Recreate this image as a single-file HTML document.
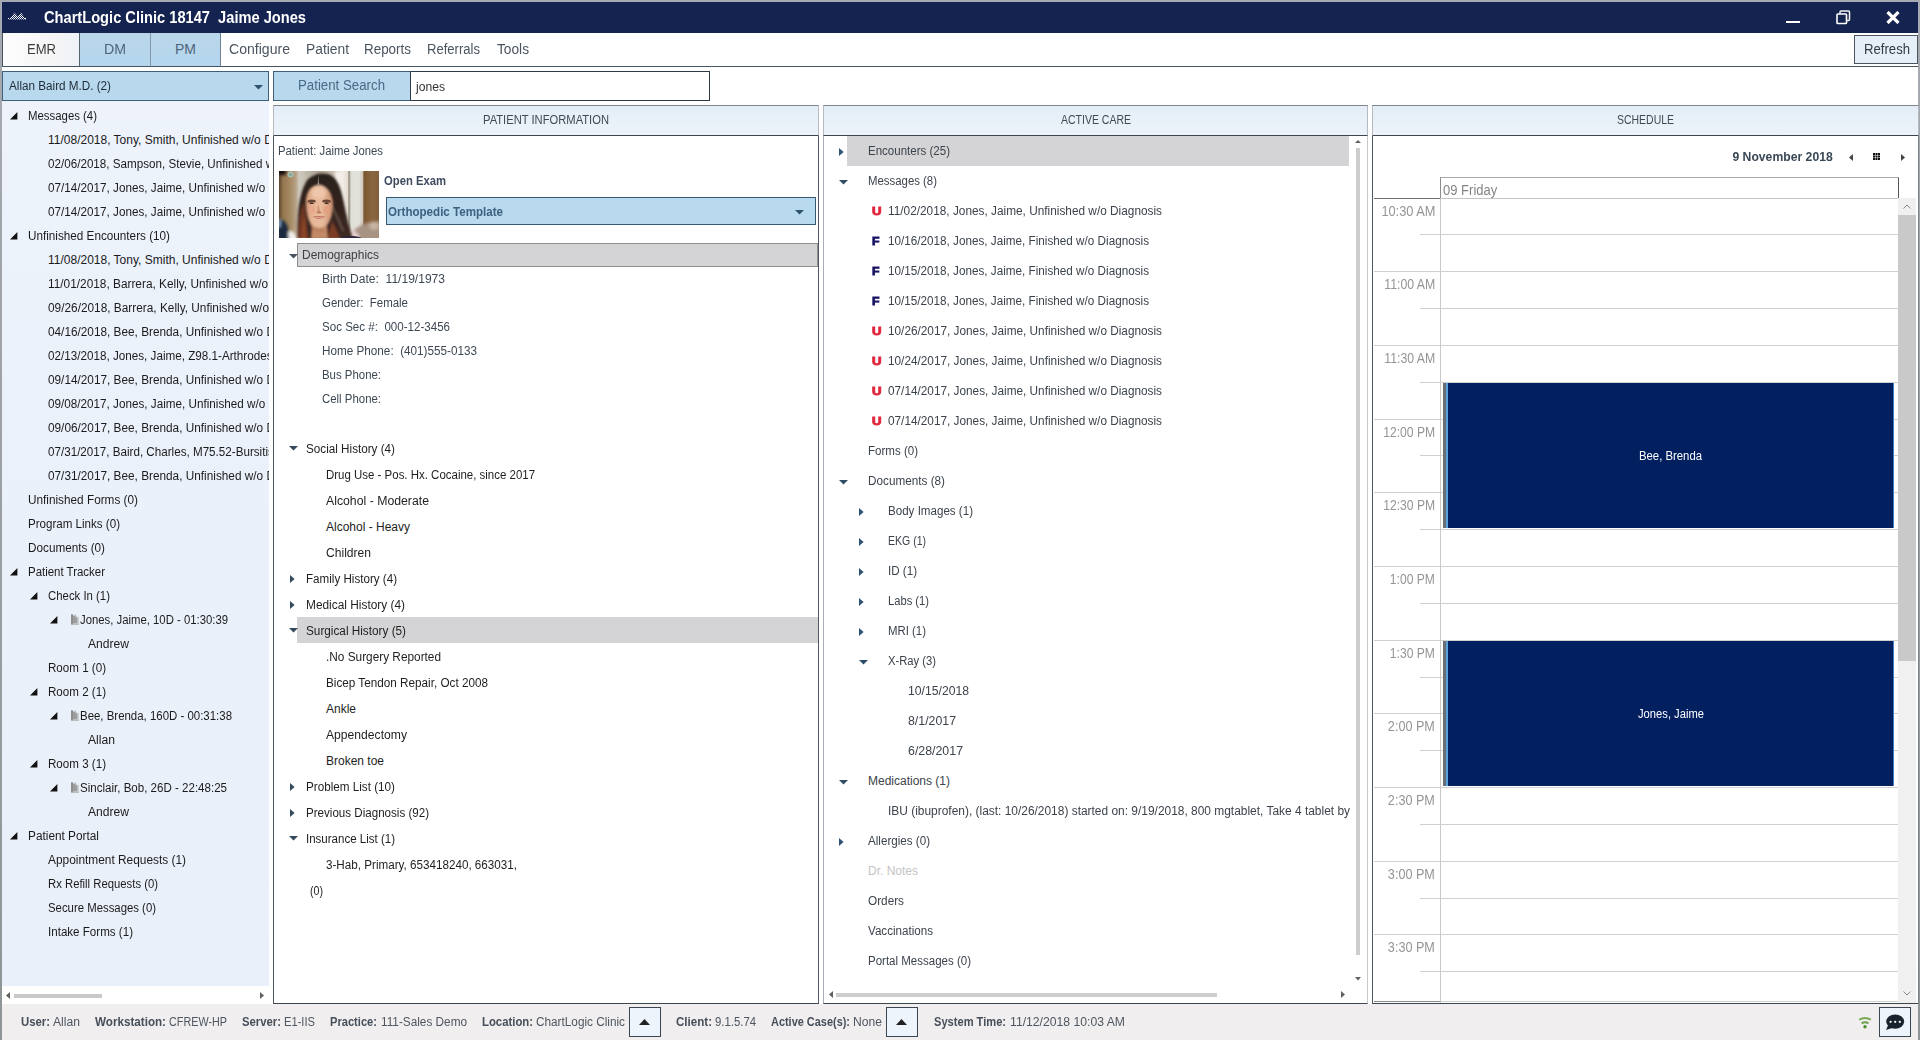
<!DOCTYPE html>
<html><head><meta charset="utf-8"><title>ChartLogic</title>
<style>
html,body{margin:0;padding:0;}
body{width:1920px;height:1040px;overflow:hidden;position:relative;background:#fff;font-family:"Liberation Sans",sans-serif;}
.t{position:absolute;white-space:pre;display:block;}
.b{position:absolute;box-sizing:border-box;display:block;}
</style></head><body>
<div class="b" style="left:0px;top:0px;width:1920px;height:1040px;background:linear-gradient(180deg,#a7aab0 0%,#9ea2a6 40%,#8f9497 100%);"></div>
<div class="b" style="left:2px;top:2px;width:1916px;height:1038px;background:#ffffff;"></div>
<div class="b" style="left:2px;top:2px;width:1916px;height:31px;background:#14234f;"></div>
<span class="t" style="top:7.0px;font-size:16px;line-height:22px;color:#ffffff;font-weight:bold;left:44px;transform-origin:0 50%;transform:scaleX(0.9150);">ChartLogic Clinic 18147  Jaime Jones</span>
<svg class="b" style="left:8px;top:12px" width="20" height="8" viewBox="0 0 20 8"><defs><pattern id="dp" width="2" height="2" patternUnits="userSpaceOnUse"><rect width="1" height="1" fill="#fff"/><rect x="1" y="1" width="1" height="1" fill="#fff"/></pattern></defs>
<path d="M1 7.5 L6.5 0.5 L10 4.5 L13 0.5 L18 7.5 Z" fill="url(#dp)"/><rect x="0" y="6" width="1" height="1" fill="#fff"/><rect x="17" y="6" width="1" height="1" fill="#fff"/></svg>
<div class="b" style="left:1786px;top:21px;width:14px;height:2px;background:#ffffff;"></div>
<svg class="b" style="left:1836px;top:10px" width="15" height="15" viewBox="0 0 15 15"><rect x="1" y="4" width="9.5" height="9.5" rx="0.8" fill="none" stroke="#fff" stroke-width="1.6"/><path d="M4 4 V2 Q4 1 5 1 H12.5 Q13.5 1 13.5 2 V9.5 Q13.5 10.5 12.5 10.5 H10.5" fill="none" stroke="#f4f4f4" stroke-width="1.5"/></svg>
<svg class="b" style="left:1886px;top:11px" width="14" height="13" viewBox="0 0 14 13"><path d="M1.5 1 L12.5 12 M12.5 1 L1.5 12" stroke="#fff" stroke-width="3.2"/></svg>
<div class="b" style="left:2px;top:33px;width:1916px;height:34px;background:#ffffff;border-bottom:1px solid #46545f;"></div>
<div class="b" style="left:2px;top:33px;width:78px;height:34px;background:linear-gradient(90deg,#fdfdfd 0%,#f4f4f5 70%,#eff2f9 100%);border:1px solid #46545f;border-top:none;"></div>
<div class="b" style="left:79px;top:33px;width:72px;height:34px;background:linear-gradient(180deg,#bad6ea,#b4d6ee);border:1px solid #46545f;border-top:none;border-left:1px solid #55656f;border-right:1px solid #8298aa;"></div>
<div class="b" style="left:150px;top:33px;width:71px;height:34px;background:linear-gradient(180deg,#bad6ea,#b4d6ee);border:1px solid #46545f;border-top:none;border-left:1px solid #8298aa;border-right:1px solid #6f8290;"></div>
<span class="t" style="top:39.0px;font-size:14px;line-height:20px;color:#3c3c3c;left:27px;transform-origin:0 50%;transform:scaleX(0.9321);">EMR</span>
<span class="t" style="top:39.0px;font-size:14px;line-height:20px;color:#4e647a;left:104px;transform-origin:0 50%;transform:scaleX(1.0104);">DM</span>
<span class="t" style="top:39.0px;font-size:14px;line-height:20px;color:#4e647a;left:175px;transform-origin:0 50%;">PM</span>
<span class="t" style="top:39.0px;font-size:14px;line-height:20px;color:#4a5560;left:229px;transform-origin:0 50%;transform:scaleX(1.0049);">Configure</span>
<span class="t" style="top:39.0px;font-size:14px;line-height:20px;color:#4a5560;left:306px;transform-origin:0 50%;transform:scaleX(0.9866);">Patient</span>
<span class="t" style="top:39.0px;font-size:14px;line-height:20px;color:#4a5560;left:364px;transform-origin:0 50%;transform:scaleX(0.9588);">Reports</span>
<span class="t" style="top:39.0px;font-size:14px;line-height:20px;color:#4a5560;left:427px;transform-origin:0 50%;transform:scaleX(0.9332);">Referrals</span>
<span class="t" style="top:39.0px;font-size:14px;line-height:20px;color:#4a5560;left:497px;transform-origin:0 50%;transform:scaleX(0.9791);">Tools</span>
<div class="b" style="left:1854px;top:35px;width:64px;height:29px;background:#e6eef7;border:1px solid #4b5560;"></div>
<span class="t" style="top:39.0px;font-size:14px;line-height:20px;color:#333b44;left:1864px;transform-origin:0 50%;transform:scaleX(0.9384);">Refresh</span>
<div class="b" style="left:2px;top:71px;width:267px;height:30px;background:#b8d8ee;border:1px solid #3f5f7a;"></div>
<span class="t" style="top:77.0px;font-size:12px;line-height:18px;color:#1e2a36;left:9px;transform-origin:0 50%;transform:scaleX(0.9742);">Allan Baird M.D. (2)</span>
<svg class="b" style="left:254px;top:85px" width="9" height="5" viewBox="0 0 9 5"><path d="M0 0 L9 0 L4.5 4.6 Z" fill="#2f536e"/></svg>
<div class="b" style="left:273px;top:71px;width:138px;height:30px;background:#b8d8ee;border:1px solid #3f5f7a;"></div>
<span class="t" style="top:75.0px;font-size:14px;line-height:20px;color:#4a6a85;left:298px;transform-origin:0 50%;transform:scaleX(0.9474);">Patient Search</span>
<div class="b" style="left:410px;top:71px;width:300px;height:30px;background:#ffffff;border:1px solid #2e3a44;"></div>
<span class="t" style="top:77.5px;font-size:12px;line-height:18px;color:#333;left:416px;transform-origin:0 50%;transform:scaleX(1.0109);">jones</span>
<div class="b" style="left:2px;top:101px;width:267px;height:885px;background:linear-gradient(180deg,#eef3fb 0%,#eaf1fa 40%,#e9f0f9 100%);"></div>
<div class="b" style="left:269px;top:101px;width:2px;height:903px;background:#ffffff;"></div>
<div class="b" style="left:2px;top:986px;width:267px;height:18px;background:#ffffff;"></div>
<svg class="b" style="left:6px;top:992px" width="4" height="7" viewBox="0 0 4 7"><path d="M4 0 L0 3.5 L4 7 Z" fill="#606060"/></svg>
<svg class="b" style="left:260px;top:992px" width="4" height="7" viewBox="0 0 4 7"><path d="M0 0 L4 3.5 L0 7 Z" fill="#606060"/></svg>
<div class="b" style="left:14px;top:994px;width:88px;height:4px;background:#c9c9c9;"></div>
<div class="b" style="left:3px;top:101px;width:266px;height:885px;overflow:hidden;"><div class="b" style="left:-3px;top:-101px;width:300px;height:1000px;">
<svg class="b" style="left:10px;top:112px" width="8" height="8" viewBox="0 0 8 8"><path d="M7.4 0 L7.4 7.4 L0 7.4 Z" fill="#111111"/></svg>
<span class="t" style="top:107.0px;font-size:12px;line-height:18px;color:#1b1b1b;left:28px;transform-origin:0 50%;transform:scaleX(0.9492);">Messages (4)</span>
<span class="t" style="top:131.0px;font-size:12px;line-height:18px;color:#1b1b1b;left:48px;transform-origin:0 50%;">11/08/2018, Tony, Smith, Unfinished w/o Diagnosis</span>
<span class="t" style="top:155.0px;font-size:12px;line-height:18px;color:#1b1b1b;left:48px;transform-origin:0 50%;transform:scaleX(0.9710);">02/06/2018, Sampson, Stevie, Unfinished w/o Diagnosis</span>
<span class="t" style="top:179.0px;font-size:12px;line-height:18px;color:#1b1b1b;left:48px;transform-origin:0 50%;transform:scaleX(0.9750);">07/14/2017, Jones, Jaime, Unfinished w/o Diagnosis</span>
<span class="t" style="top:203.0px;font-size:12px;line-height:18px;color:#1b1b1b;left:48px;transform-origin:0 50%;transform:scaleX(0.9750);">07/14/2017, Jones, Jaime, Unfinished w/o Diagnosis</span>
<svg class="b" style="left:10px;top:232px" width="8" height="8" viewBox="0 0 8 8"><path d="M7.4 0 L7.4 7.4 L0 7.4 Z" fill="#111111"/></svg>
<span class="t" style="top:227.0px;font-size:12px;line-height:18px;color:#1b1b1b;left:28px;transform-origin:0 50%;transform:scaleX(0.9765);">Unfinished Encounters (10)</span>
<span class="t" style="top:251.0px;font-size:12px;line-height:18px;color:#1b1b1b;left:48px;transform-origin:0 50%;">11/08/2018, Tony, Smith, Unfinished w/o Diagnosis</span>
<span class="t" style="top:275.0px;font-size:12px;line-height:18px;color:#1b1b1b;left:48px;transform-origin:0 50%;transform:scaleX(0.9870);">11/01/2018, Barrera, Kelly, Unfinished w/o Diagnosis</span>
<span class="t" style="top:299.0px;font-size:12px;line-height:18px;color:#1b1b1b;left:48px;transform-origin:0 50%;transform:scaleX(0.9870);">09/26/2018, Barrera, Kelly, Unfinished w/o Diagnosis</span>
<span class="t" style="top:323.0px;font-size:12px;line-height:18px;color:#1b1b1b;left:48px;transform-origin:0 50%;transform:scaleX(0.9830);">04/16/2018, Bee, Brenda, Unfinished w/o Diagnosis</span>
<span class="t" style="top:347.0px;font-size:12px;line-height:18px;color:#1b1b1b;left:48px;transform-origin:0 50%;transform:scaleX(0.9730);">02/13/2018, Jones, Jaime, Z98.1-Arthrodesis status</span>
<span class="t" style="top:371.0px;font-size:12px;line-height:18px;color:#1b1b1b;left:48px;transform-origin:0 50%;transform:scaleX(0.9830);">09/14/2017, Bee, Brenda, Unfinished w/o Diagnosis</span>
<span class="t" style="top:395.0px;font-size:12px;line-height:18px;color:#1b1b1b;left:48px;transform-origin:0 50%;transform:scaleX(0.9750);">09/08/2017, Jones, Jaime, Unfinished w/o Diagnosis</span>
<span class="t" style="top:419.0px;font-size:12px;line-height:18px;color:#1b1b1b;left:48px;transform-origin:0 50%;transform:scaleX(0.9830);">09/06/2017, Bee, Brenda, Unfinished w/o Diagnosis</span>
<span class="t" style="top:443.0px;font-size:12px;line-height:18px;color:#1b1b1b;left:48px;transform-origin:0 50%;transform:scaleX(0.9700);">07/31/2017, Baird, Charles, M75.52-Bursitis of left shoulder</span>
<span class="t" style="top:467.0px;font-size:12px;line-height:18px;color:#1b1b1b;left:48px;transform-origin:0 50%;transform:scaleX(0.9830);">07/31/2017, Bee, Brenda, Unfinished w/o Diagnosis</span>
<span class="t" style="top:491.0px;font-size:12px;line-height:18px;color:#1b1b1b;left:28px;transform-origin:0 50%;transform:scaleX(0.9819);">Unfinished Forms (0)</span>
<span class="t" style="top:515.0px;font-size:12px;line-height:18px;color:#1b1b1b;left:28px;transform-origin:0 50%;transform:scaleX(0.9647);">Program Links (0)</span>
<span class="t" style="top:539.0px;font-size:12px;line-height:18px;color:#1b1b1b;left:28px;transform-origin:0 50%;transform:scaleX(0.9785);">Documents (0)</span>
<svg class="b" style="left:10px;top:568px" width="8" height="8" viewBox="0 0 8 8"><path d="M7.4 0 L7.4 7.4 L0 7.4 Z" fill="#111111"/></svg>
<span class="t" style="top:563.0px;font-size:12px;line-height:18px;color:#1b1b1b;left:28px;transform-origin:0 50%;transform:scaleX(0.9541);">Patient Tracker</span>
<svg class="b" style="left:30px;top:592px" width="8" height="8" viewBox="0 0 8 8"><path d="M7.4 0 L7.4 7.4 L0 7.4 Z" fill="#111111"/></svg>
<span class="t" style="top:587.0px;font-size:12px;line-height:18px;color:#1b1b1b;left:48px;transform-origin:0 50%;transform:scaleX(0.9486);">Check In (1)</span>
<svg class="b" style="left:50px;top:616px" width="8" height="8" viewBox="0 0 8 8"><path d="M7.4 0 L7.4 7.4 L0 7.4 Z" fill="#111111"/></svg>
<svg class="b" style="left:71px;top:614px" width="8" height="11" viewBox="0 0 8 11"><rect x="0" y="0.3" width="2" height="10" fill="#8e8e8e"/><path d="M2 1.6 H4.6 L6.6 3.8 V9.6 H2 Z" fill="#9d9d9d"/><path d="M4.4 0.4 V3.6 H7.6" fill="none" stroke="#b9b9b9" stroke-width="0.9"/><rect x="6.8" y="3.6" width="1" height="7" fill="#c9c9c9"/><rect x="0" y="9.7" width="7.8" height="1" fill="#a9a9a9"/></svg>
<span class="t" style="top:611.0px;font-size:12px;line-height:18px;color:#1b1b1b;left:80px;transform-origin:0 50%;transform:scaleX(0.9442);">Jones, Jaime, 10D - 01:30:39</span>
<span class="t" style="top:635.0px;font-size:12px;line-height:18px;color:#1b1b1b;left:88px;transform-origin:0 50%;transform:scaleX(1.0077);">Andrew</span>
<span class="t" style="top:659.0px;font-size:12px;line-height:18px;color:#1b1b1b;left:48px;transform-origin:0 50%;transform:scaleX(0.9664);">Room 1 (0)</span>
<svg class="b" style="left:30px;top:688px" width="8" height="8" viewBox="0 0 8 8"><path d="M7.4 0 L7.4 7.4 L0 7.4 Z" fill="#111111"/></svg>
<span class="t" style="top:683.0px;font-size:12px;line-height:18px;color:#1b1b1b;left:48px;transform-origin:0 50%;transform:scaleX(0.9664);">Room 2 (1)</span>
<svg class="b" style="left:50px;top:712px" width="8" height="8" viewBox="0 0 8 8"><path d="M7.4 0 L7.4 7.4 L0 7.4 Z" fill="#111111"/></svg>
<svg class="b" style="left:71px;top:710px" width="8" height="11" viewBox="0 0 8 11"><rect x="0" y="0.3" width="2" height="10" fill="#8e8e8e"/><path d="M2 1.6 H4.6 L6.6 3.8 V9.6 H2 Z" fill="#9d9d9d"/><path d="M4.4 0.4 V3.6 H7.6" fill="none" stroke="#b9b9b9" stroke-width="0.9"/><rect x="6.8" y="3.6" width="1" height="7" fill="#c9c9c9"/><rect x="0" y="9.7" width="7.8" height="1" fill="#a9a9a9"/></svg>
<span class="t" style="top:707.0px;font-size:12px;line-height:18px;color:#1b1b1b;left:80px;transform-origin:0 50%;transform:scaleX(0.9533);">Bee, Brenda, 160D - 00:31:38</span>
<span class="t" style="top:731.0px;font-size:12px;line-height:18px;color:#1b1b1b;left:88px;transform-origin:0 50%;transform:scaleX(1.0119);">Allan</span>
<svg class="b" style="left:30px;top:760px" width="8" height="8" viewBox="0 0 8 8"><path d="M7.4 0 L7.4 7.4 L0 7.4 Z" fill="#111111"/></svg>
<span class="t" style="top:755.0px;font-size:12px;line-height:18px;color:#1b1b1b;left:48px;transform-origin:0 50%;transform:scaleX(0.9664);">Room 3 (1)</span>
<svg class="b" style="left:50px;top:784px" width="8" height="8" viewBox="0 0 8 8"><path d="M7.4 0 L7.4 7.4 L0 7.4 Z" fill="#111111"/></svg>
<svg class="b" style="left:71px;top:782px" width="8" height="11" viewBox="0 0 8 11"><rect x="0" y="0.3" width="2" height="10" fill="#8e8e8e"/><path d="M2 1.6 H4.6 L6.6 3.8 V9.6 H2 Z" fill="#9d9d9d"/><path d="M4.4 0.4 V3.6 H7.6" fill="none" stroke="#b9b9b9" stroke-width="0.9"/><rect x="6.8" y="3.6" width="1" height="7" fill="#c9c9c9"/><rect x="0" y="9.7" width="7.8" height="1" fill="#a9a9a9"/></svg>
<span class="t" style="top:779.0px;font-size:12px;line-height:18px;color:#1b1b1b;left:80px;transform-origin:0 50%;transform:scaleX(0.9623);">Sinclair, Bob, 26D - 22:48:25</span>
<span class="t" style="top:803.0px;font-size:12px;line-height:18px;color:#1b1b1b;left:88px;transform-origin:0 50%;transform:scaleX(1.0077);">Andrew</span>
<svg class="b" style="left:10px;top:832px" width="8" height="8" viewBox="0 0 8 8"><path d="M7.4 0 L7.4 7.4 L0 7.4 Z" fill="#111111"/></svg>
<span class="t" style="top:827.0px;font-size:12px;line-height:18px;color:#1b1b1b;left:28px;transform-origin:0 50%;transform:scaleX(0.9855);">Patient Portal</span>
<span class="t" style="top:851.0px;font-size:12px;line-height:18px;color:#1b1b1b;left:48px;transform-origin:0 50%;transform:scaleX(0.9899);">Appointment Requests (1)</span>
<span class="t" style="top:875.0px;font-size:12px;line-height:18px;color:#1b1b1b;left:48px;transform-origin:0 50%;transform:scaleX(0.9426);">Rx Refill Requests (0)</span>
<span class="t" style="top:899.0px;font-size:12px;line-height:18px;color:#1b1b1b;left:48px;transform-origin:0 50%;transform:scaleX(0.9470);">Secure Messages (0)</span>
<span class="t" style="top:923.0px;font-size:12px;line-height:18px;color:#1b1b1b;left:48px;transform-origin:0 50%;transform:scaleX(0.9657);">Intake Forms (1)</span>
</div></div>
<div class="b" style="left:273px;top:105px;width:546px;height:31px;background:linear-gradient(180deg,#e4edf7 0%,#e8f0f8 45%,#edf3f9 100%);border:1px solid #b4bac0;border-top:1px solid #7d858c;border-bottom:1px solid #3d464e;"></div>
<div class="b" style="left:273px;top:136px;width:546px;height:868px;background:#ffffff;border-left:1px solid #4d5a66;border-right:1px solid #4d5a66;border-bottom:1px solid #3d464e;"></div>
<span class="t" style="top:111.0px;font-size:12px;line-height:18px;color:#3f4a55;left:483.0px;transform-origin:0 50%;transform:scaleX(0.9325);">PATIENT INFORMATION</span>
<div class="b" style="left:823px;top:105px;width:545px;height:31px;background:linear-gradient(180deg,#e4edf7 0%,#e8f0f8 45%,#edf3f9 100%);border:1px solid #b4bac0;border-top:1px solid #7d858c;border-bottom:1px solid #3d464e;"></div>
<div class="b" style="left:823px;top:136px;width:545px;height:868px;background:#ffffff;border-left:1px solid #a9adb1;border-right:1px solid #c6cacf;border-bottom:1px solid #3d464e;"></div>
<span class="t" style="top:111.0px;font-size:12px;line-height:18px;color:#3f4a55;left:1060.5px;transform-origin:0 50%;transform:scaleX(0.8748);">ACTIVE CARE</span>
<div class="b" style="left:1372px;top:105px;width:547px;height:31px;background:linear-gradient(180deg,#e4edf7 0%,#e8f0f8 45%,#edf3f9 100%);border:1px solid #b4bac0;border-top:1px solid #7d858c;border-bottom:1px solid #3d464e;"></div>
<div class="b" style="left:1372px;top:136px;width:547px;height:868px;background:#ffffff;border-left:1px solid #4d5a66;border-right:1px solid #4d5a66;border-bottom:1px solid #3d464e;"></div>
<span class="t" style="top:111.0px;font-size:12px;line-height:18px;color:#3f4a55;left:1617.0px;transform-origin:0 50%;transform:scaleX(0.8722);">SCHEDULE</span>
<div class="b" style="left:1918px;top:136px;width:1px;height:868px;background:#7d8388;"></div>
<span class="t" style="top:142.0px;font-size:12px;line-height:18px;color:#3d4854;left:278px;transform-origin:0 50%;transform:scaleX(0.9426);">Patient: Jaime Jones</span>
<span class="t" style="top:172.0px;font-size:12px;line-height:18px;color:#3e4b5f;font-weight:bold;left:384px;transform-origin:0 50%;transform:scaleX(0.9391);">Open Exam</span>
<div class="b" style="left:386px;top:197px;width:430px;height:28px;background:#b8d9ee;border:1px solid #375872;"></div>
<span class="t" style="top:202.5px;font-size:12px;line-height:18px;color:#3f5f7e;font-weight:bold;left:388px;transform-origin:0 50%;transform:scaleX(0.9654);">Orthopedic Template</span>
<svg class="b" style="left:795px;top:210px" width="9" height="5" viewBox="0 0 9 5"><path d="M0 0 L9 0 L4.5 4.6 Z" fill="#2f536e"/></svg>
<div class="b" style="left:297px;top:243px;width:521px;height:24px;background:#d4d3d5;border:1px solid #8e8e8e;"></div>
<svg class="b" style="left:289px;top:254px" width="9" height="5" viewBox="0 0 9 5"><path d="M0 0 L9 0 L4.5 4.6 Z" fill="#4a5661"/></svg>
<span class="t" style="top:246.0px;font-size:12px;line-height:18px;color:#3f3f3f;left:302px;transform-origin:0 50%;transform:scaleX(0.9953);">Demographics</span>
<span class="t" style="top:270.0px;font-size:12px;line-height:18px;color:#3d4854;left:322px;transform-origin:0 50%;transform:scaleX(1.0039);">Birth Date:  11/19/1973</span>
<span class="t" style="top:294.0px;font-size:12px;line-height:18px;color:#3d4854;left:322px;transform-origin:0 50%;transform:scaleX(0.9551);">Gender:  Female</span>
<span class="t" style="top:318.0px;font-size:12px;line-height:18px;color:#3d4854;left:322px;transform-origin:0 50%;transform:scaleX(0.9642);">Soc Sec #:  000-12-3456</span>
<span class="t" style="top:342.0px;font-size:12px;line-height:18px;color:#3d4854;left:322px;transform-origin:0 50%;transform:scaleX(0.9763);">Home Phone:  (401)555-0133</span>
<span class="t" style="top:366.0px;font-size:12px;line-height:18px;color:#3d4854;left:322px;transform-origin:0 50%;transform:scaleX(0.9509);">Bus Phone:</span>
<span class="t" style="top:390.0px;font-size:12px;line-height:18px;color:#3d4854;left:322px;transform-origin:0 50%;transform:scaleX(0.9510);">Cell Phone:</span>
<svg class="b" style="left:289px;top:446px" width="9" height="5" viewBox="0 0 9 5"><path d="M0 0 L9 0 L4.5 4.6 Z" fill="#34495c"/></svg>
<span class="t" style="top:440.0px;font-size:12px;line-height:18px;color:#1e1e1e;left:306px;transform-origin:0 50%;transform:scaleX(0.9742);">Social History (4)</span>
<span class="t" style="top:466.0px;font-size:12px;line-height:18px;color:#1e1e1e;left:326px;transform-origin:0 50%;transform:scaleX(0.9554);">Drug Use - Pos. Hx. Cocaine, since 2017</span>
<span class="t" style="top:492.0px;font-size:12px;line-height:18px;color:#1e1e1e;left:326px;transform-origin:0 50%;transform:scaleX(1.0227);">Alcohol - Moderate</span>
<span class="t" style="top:518.0px;font-size:12px;line-height:18px;color:#1e1e1e;left:326px;transform-origin:0 50%;">Alcohol - Heavy</span>
<span class="t" style="top:544.0px;font-size:12px;line-height:18px;color:#1e1e1e;left:326px;transform-origin:0 50%;transform:scaleX(1.0070);">Children</span>
<svg class="b" style="left:290px;top:575px" width="5" height="8" viewBox="0 0 5 8"><path d="M0 0 L4.6 4 L0 8 Z" fill="#34495c"/></svg>
<span class="t" style="top:570.0px;font-size:12px;line-height:18px;color:#1e1e1e;left:306px;transform-origin:0 50%;transform:scaleX(0.9681);">Family History (4)</span>
<svg class="b" style="left:290px;top:601px" width="5" height="8" viewBox="0 0 5 8"><path d="M0 0 L4.6 4 L0 8 Z" fill="#34495c"/></svg>
<span class="t" style="top:596.0px;font-size:12px;line-height:18px;color:#1e1e1e;left:306px;transform-origin:0 50%;transform:scaleX(0.9898);">Medical History (4)</span>
<div class="b" style="left:297px;top:617px;width:521px;height:26px;background:#d4d3d5;"></div>
<svg class="b" style="left:289px;top:628px" width="9" height="5" viewBox="0 0 9 5"><path d="M0 0 L9 0 L4.5 4.6 Z" fill="#34495c"/></svg>
<span class="t" style="top:622.0px;font-size:12px;line-height:18px;color:#1e1e1e;left:306px;transform-origin:0 50%;transform:scaleX(0.9802);">Surgical History (5)</span>
<span class="t" style="top:648.0px;font-size:12px;line-height:18px;color:#1e1e1e;left:326px;transform-origin:0 50%;transform:scaleX(0.9852);">.No Surgery Reported</span>
<span class="t" style="top:674.0px;font-size:12px;line-height:18px;color:#1e1e1e;left:326px;transform-origin:0 50%;transform:scaleX(0.9766);">Bicep Tendon Repair, Oct 2008</span>
<span class="t" style="top:700.0px;font-size:12px;line-height:18px;color:#1e1e1e;left:326px;transform-origin:0 50%;">Ankle</span>
<span class="t" style="top:726.0px;font-size:12px;line-height:18px;color:#1e1e1e;left:326px;transform-origin:0 50%;transform:scaleX(1.0119);">Appendectomy</span>
<span class="t" style="top:752.0px;font-size:12px;line-height:18px;color:#1e1e1e;left:326px;transform-origin:0 50%;">Broken toe</span>
<svg class="b" style="left:290px;top:783px" width="5" height="8" viewBox="0 0 5 8"><path d="M0 0 L4.6 4 L0 8 Z" fill="#34495c"/></svg>
<span class="t" style="top:778.0px;font-size:12px;line-height:18px;color:#1e1e1e;left:306px;transform-origin:0 50%;transform:scaleX(0.9741);">Problem List (10)</span>
<svg class="b" style="left:290px;top:809px" width="5" height="8" viewBox="0 0 5 8"><path d="M0 0 L4.6 4 L0 8 Z" fill="#34495c"/></svg>
<span class="t" style="top:804.0px;font-size:12px;line-height:18px;color:#1e1e1e;left:306px;transform-origin:0 50%;transform:scaleX(0.9656);">Previous Diagnosis (92)</span>
<svg class="b" style="left:289px;top:836px" width="9" height="5" viewBox="0 0 9 5"><path d="M0 0 L9 0 L4.5 4.6 Z" fill="#34495c"/></svg>
<span class="t" style="top:830.0px;font-size:12px;line-height:18px;color:#1e1e1e;left:306px;transform-origin:0 50%;transform:scaleX(0.9600);">Insurance List (1)</span>
<span class="t" style="top:856.0px;font-size:12px;line-height:18px;color:#1e1e1e;left:326px;transform-origin:0 50%;transform:scaleX(0.9717);">3-Hab, Primary, 653418240, 663031,</span>
<span class="t" style="top:882.0px;font-size:12px;line-height:18px;color:#1e1e1e;left:310px;transform-origin:0 50%;transform:scaleX(0.8863);">(0)</span>
<svg class="b" style="left:279px;top:171px" width="100" height="67" viewBox="0 0 100 67"><defs>
<filter id="b1" x="-20%" y="-20%" width="140%" height="140%"><feGaussianBlur stdDeviation="1.6"/></filter>
<filter id="b2" x="-20%" y="-20%" width="140%" height="140%"><feGaussianBlur stdDeviation="0.9"/></filter>
<filter id="b3" x="-20%" y="-20%" width="140%" height="140%"><feGaussianBlur stdDeviation="0.55"/></filter>
<linearGradient id="bg" x1="0" x2="1" y1="0" y2="0">
<stop offset="0" stop-color="#5a4630"/><stop offset="0.04" stop-color="#95774f"/><stop offset="0.12" stop-color="#a88c66"/><stop offset="0.17" stop-color="#b7a488"/><stop offset="0.2" stop-color="#cfcac0"/><stop offset="0.27" stop-color="#c2bcb0"/><stop offset="0.4" stop-color="#a79f8c"/>
<stop offset="0.58" stop-color="#cfc5b8"/><stop offset="0.63" stop-color="#f1ebe4"/><stop offset="0.685" stop-color="#e6ded4"/><stop offset="0.70" stop-color="#8f8a78"/><stop offset="0.72" stop-color="#dfe0d8"/><stop offset="0.80" stop-color="#e3e2dc"/><stop offset="0.835" stop-color="#cfc8bc"/><stop offset="0.85" stop-color="#7a5631"/><stop offset="0.93" stop-color="#8a6640"/><stop offset="1" stop-color="#80603c"/></linearGradient>
<linearGradient id="hair" x1="0" x2="0" y1="0" y2="1"><stop offset="0" stop-color="#2b211e"/><stop offset="0.55" stop-color="#33241f"/><stop offset="1" stop-color="#402a22"/></linearGradient>
<linearGradient id="skin" x1="0" x2="1" y1="0" y2="0"><stop offset="0" stop-color="#cf9674"/><stop offset="0.25" stop-color="#e7b898"/><stop offset="0.6" stop-color="#e9bc9e"/><stop offset="1" stop-color="#c98e6e"/></linearGradient>
<clipPath id="pc"><rect width="100" height="67"/></clipPath>
</defs>
<g clip-path="url(#pc)">
<rect width="100" height="67" fill="url(#bg)"/>
<g filter="url(#b1)">
<rect x="-2" y="-2" width="9" height="6" fill="#14100c"/>
<path d="M-2 50 Q4 46 8 54 L13 70 L-2 70 Z" fill="#1a2a40"/>
<rect x="-1" y="48" width="2.5" height="8" fill="#8fb0d8"/>
<path d="M9 62 Q14 55 19 70 L10 70 Z" fill="#f0eeee"/>
<path d="M74 60 Q86 49 102 50 L102 70 L72 70 Z" fill="#a89282"/>
<ellipse cx="95" cy="55" rx="5" ry="4" fill="#c8b4a2"/>
<path d="M64 62 Q72 54 80 64 L80 70 L62 70 Z" fill="#e4d0cf"/>
<rect x="56" y="0" width="8" height="30" fill="#f4eee8"/>
</g>
<circle cx="11.5" cy="3.6" r="3" fill="#a9bfb1" filter="url(#b3)"/>
<circle cx="11.5" cy="3.6" r="1.6" fill="#86a596" filter="url(#b3)"/>
<g filter="url(#b2)">
<path d="M18.5 68 C18 45 19.5 24 27 11 C32 3 45 0 53 5 C62 11 64 28 67.5 44 C69.5 54 72 62 74 68 Z" fill="url(#hair)"/>
<path d="M19 68 C19 52 20.5 40 25 31 C27 40 27.5 55 30 68 Z" fill="#6a3420"/>
<path d="M22 68 C22 58 23 50 25.5 44 L28 68 Z" fill="#8a4528"/>
<path d="M47 68 C50 62 52 56 53 50 C56 56 59 62 61 68 Z" fill="#7b3d25"/>
<path d="M51 30 C56 40 61 50 65 60 L63.5 60 C59 50 55 40 50 31 Z" fill="#6d5a4e"/>
</g>
<g filter="url(#b2)">
<path d="M26.8 31 C26.8 21 32.5 14 40 13.6 C47 14 52.8 21 53.8 31 C54.6 41 51.6 50.5 47 55.5 C43.2 59 37.3 59 33.6 55.5 C29 50.5 26.8 41 26.8 31 Z" fill="url(#skin)"/>
<path d="M33 53 C36 58 45 58 48 53 L49 68 L32 68 Z" fill="#c48a68"/>
<path d="M30 50 C33 58 40 60 46 57 L44 61 L34 60 Z" fill="#b87d5c"/>
<ellipse cx="40" cy="22" rx="7" ry="5" fill="#efc6ab"/>
<ellipse cx="33" cy="39" rx="3.5" ry="4" fill="#e8a88c"/>
<ellipse cx="47.5" cy="39" rx="3.5" ry="4" fill="#e2a080"/>
</g>
<path d="M39.2 4 L40.3 15 L38.6 15 Z" fill="#9c9384" filter="url(#b3)"/>
<g filter="url(#b3)">
<path d="M28.5 29.8 Q32 27.4 36.5 29.2 L36.5 31.4 Q32.5 30.2 29 31.8 Z" fill="#6b4436"/>
<path d="M43.5 29.2 Q48 27.4 52 29.8 L51.5 31.8 Q48 30.2 43.5 31.4 Z" fill="#6b4436"/>
<ellipse cx="32.7" cy="32.2" rx="2.2" ry="0.9" fill="#4a2f26"/>
<ellipse cx="47.6" cy="32.2" rx="2.2" ry="0.9" fill="#4a2f26"/>
<path d="M39 33 L41.6 41 L38 41.4 Z" fill="#cf9774"/>
<ellipse cx="40" cy="41.6" rx="2.6" ry="1" fill="#b97a5e"/>
<path d="M33.5 45.6 Q40 44.2 46.5 45.6 Q40 50.5 33.5 45.6 Z" fill="#c0705c"/>
<path d="M35.3 46 Q40 46.9 44.7 46 Q40 47.9 35.3 46Z" fill="#f3e0d8"/>
<path d="M60 67 Q70 63.5 82 66.5 L82 68 L60 68 Z" fill="#2d2540"/>
</g></g></svg>
<div class="b" style="left:847px;top:136px;width:502px;height:30px;background:#d4d3d5;"></div>
<svg class="b" style="left:839px;top:147.5px" width="5" height="8" viewBox="0 0 5 8"><path d="M0 0 L4.6 4 L0 8 Z" fill="#2f5374"/></svg>
<span class="t" style="top:142.0px;font-size:12px;line-height:18px;color:#3c434c;left:868px;transform-origin:0 50%;transform:scaleX(0.9604);">Encounters (25)</span>
<svg class="b" style="left:839px;top:180px" width="9" height="5" viewBox="0 0 9 5"><path d="M0 0 L9 0 L4.5 4.6 Z" fill="#2f4d66"/></svg>
<span class="t" style="top:172.0px;font-size:12px;line-height:18px;color:#3c434c;left:868px;transform-origin:0 50%;transform:scaleX(0.9492);">Messages (8)</span>
<span class="t" style="top:203.0px;font-size:11px;line-height:17px;color:#e0263c;font-weight:bold;left:872px;transform-origin:0 50%;transform:scaleX(1.1959);-webkit-text-stroke:0.9px #e0263c;">U</span>
<span class="t" style="top:202.0px;font-size:12px;line-height:18px;color:#3c434c;left:888px;transform-origin:0 50%;transform:scaleX(0.9858);">11/02/2018, Jones, Jaime, Unfinished w/o Diagnosis</span>
<span class="t" style="top:233.0px;font-size:11px;line-height:17px;color:#1a1464;font-weight:bold;left:872.3px;transform-origin:0 50%;transform:scaleX(1.1163);-webkit-text-stroke:0.8px #1a1464;">F</span>
<span class="t" style="top:232.0px;font-size:12px;line-height:18px;color:#3c434c;left:888px;transform-origin:0 50%;transform:scaleX(0.9758);">10/16/2018, Jones, Jaime, Finished w/o Diagnosis</span>
<span class="t" style="top:263.0px;font-size:11px;line-height:17px;color:#1a1464;font-weight:bold;left:872.3px;transform-origin:0 50%;transform:scaleX(1.1163);-webkit-text-stroke:0.8px #1a1464;">F</span>
<span class="t" style="top:262.0px;font-size:12px;line-height:18px;color:#3c434c;left:888px;transform-origin:0 50%;transform:scaleX(0.9758);">10/15/2018, Jones, Jaime, Finished w/o Diagnosis</span>
<span class="t" style="top:293.0px;font-size:11px;line-height:17px;color:#1a1464;font-weight:bold;left:872.3px;transform-origin:0 50%;transform:scaleX(1.1163);-webkit-text-stroke:0.8px #1a1464;">F</span>
<span class="t" style="top:292.0px;font-size:12px;line-height:18px;color:#3c434c;left:888px;transform-origin:0 50%;transform:scaleX(0.9758);">10/15/2018, Jones, Jaime, Finished w/o Diagnosis</span>
<span class="t" style="top:323.0px;font-size:11px;line-height:17px;color:#e0263c;font-weight:bold;left:872px;transform-origin:0 50%;transform:scaleX(1.1959);-webkit-text-stroke:0.9px #e0263c;">U</span>
<span class="t" style="top:322.0px;font-size:12px;line-height:18px;color:#3c434c;left:888px;transform-origin:0 50%;transform:scaleX(0.9827);">10/26/2017, Jones, Jaime, Unfinished w/o Diagnosis</span>
<span class="t" style="top:353.0px;font-size:11px;line-height:17px;color:#e0263c;font-weight:bold;left:872px;transform-origin:0 50%;transform:scaleX(1.1959);-webkit-text-stroke:0.9px #e0263c;">U</span>
<span class="t" style="top:352.0px;font-size:12px;line-height:18px;color:#3c434c;left:888px;transform-origin:0 50%;transform:scaleX(0.9827);">10/24/2017, Jones, Jaime, Unfinished w/o Diagnosis</span>
<span class="t" style="top:383.0px;font-size:11px;line-height:17px;color:#e0263c;font-weight:bold;left:872px;transform-origin:0 50%;transform:scaleX(1.1959);-webkit-text-stroke:0.9px #e0263c;">U</span>
<span class="t" style="top:382.0px;font-size:12px;line-height:18px;color:#3c434c;left:888px;transform-origin:0 50%;transform:scaleX(0.9827);">07/14/2017, Jones, Jaime, Unfinished w/o Diagnosis</span>
<span class="t" style="top:413.0px;font-size:11px;line-height:17px;color:#e0263c;font-weight:bold;left:872px;transform-origin:0 50%;transform:scaleX(1.1959);-webkit-text-stroke:0.9px #e0263c;">U</span>
<span class="t" style="top:412.0px;font-size:12px;line-height:18px;color:#3c434c;left:888px;transform-origin:0 50%;transform:scaleX(0.9827);">07/14/2017, Jones, Jaime, Unfinished w/o Diagnosis</span>
<span class="t" style="top:442.0px;font-size:12px;line-height:18px;color:#3c434c;left:868px;transform-origin:0 50%;transform:scaleX(0.9616);">Forms (0)</span>
<svg class="b" style="left:839px;top:480px" width="9" height="5" viewBox="0 0 9 5"><path d="M0 0 L9 0 L4.5 4.6 Z" fill="#2f4d66"/></svg>
<span class="t" style="top:472.0px;font-size:12px;line-height:18px;color:#3c434c;left:868px;transform-origin:0 50%;transform:scaleX(0.9785);">Documents (8)</span>
<svg class="b" style="left:859px;top:507.5px" width="5" height="8" viewBox="0 0 5 8"><path d="M0 0 L4.6 4 L0 8 Z" fill="#2f5374"/></svg>
<span class="t" style="top:502.0px;font-size:12px;line-height:18px;color:#3c434c;left:888px;transform-origin:0 50%;transform:scaleX(0.9655);">Body Images (1)</span>
<svg class="b" style="left:859px;top:537.5px" width="5" height="8" viewBox="0 0 5 8"><path d="M0 0 L4.6 4 L0 8 Z" fill="#2f5374"/></svg>
<span class="t" style="top:532.0px;font-size:12px;line-height:18px;color:#3c434c;left:888px;transform-origin:0 50%;transform:scaleX(0.8767);">EKG (1)</span>
<svg class="b" style="left:859px;top:567.5px" width="5" height="8" viewBox="0 0 5 8"><path d="M0 0 L4.6 4 L0 8 Z" fill="#2f5374"/></svg>
<span class="t" style="top:562.0px;font-size:12px;line-height:18px;color:#3c434c;left:888px;transform-origin:0 50%;transform:scaleX(0.9666);">ID (1)</span>
<svg class="b" style="left:859px;top:597.5px" width="5" height="8" viewBox="0 0 5 8"><path d="M0 0 L4.6 4 L0 8 Z" fill="#2f5374"/></svg>
<span class="t" style="top:592.0px;font-size:12px;line-height:18px;color:#3c434c;left:888px;transform-origin:0 50%;transform:scaleX(0.9314);">Labs (1)</span>
<svg class="b" style="left:859px;top:627.5px" width="5" height="8" viewBox="0 0 5 8"><path d="M0 0 L4.6 4 L0 8 Z" fill="#2f5374"/></svg>
<span class="t" style="top:622.0px;font-size:12px;line-height:18px;color:#3c434c;left:888px;transform-origin:0 50%;transform:scaleX(0.9500);">MRI (1)</span>
<svg class="b" style="left:859px;top:660px" width="9" height="5" viewBox="0 0 9 5"><path d="M0 0 L9 0 L4.5 4.6 Z" fill="#2f4d66"/></svg>
<span class="t" style="top:652.0px;font-size:12px;line-height:18px;color:#3c434c;left:888px;transform-origin:0 50%;transform:scaleX(0.9349);">X-Ray (3)</span>
<span class="t" style="top:682.0px;font-size:12px;line-height:18px;color:#3c434c;left:908px;transform-origin:0 50%;transform:scaleX(1.0157);">10/15/2018</span>
<span class="t" style="top:712.0px;font-size:12px;line-height:18px;color:#3c434c;left:908px;transform-origin:0 50%;transform:scaleX(1.0276);">8/1/2017</span>
<span class="t" style="top:742.0px;font-size:12px;line-height:18px;color:#3c434c;left:908px;transform-origin:0 50%;transform:scaleX(1.0303);">6/28/2017</span>
<svg class="b" style="left:839px;top:780px" width="9" height="5" viewBox="0 0 9 5"><path d="M0 0 L9 0 L4.5 4.6 Z" fill="#2f4d66"/></svg>
<span class="t" style="top:772.0px;font-size:12px;line-height:18px;color:#3c434c;left:868px;transform-origin:0 50%;">Medications (1)</span>
<span class="t" style="top:802.0px;font-size:12px;line-height:18px;color:#3c434c;left:888px;transform-origin:0 50%;transform:scaleX(0.9941);">IBU (ibuprofen), (last: 10/26/2018) started on: 9/19/2018, 800 mgtablet, Take 4 tablet by</span>
<svg class="b" style="left:839px;top:837.5px" width="5" height="8" viewBox="0 0 5 8"><path d="M0 0 L4.6 4 L0 8 Z" fill="#2f5374"/></svg>
<span class="t" style="top:832.0px;font-size:12px;line-height:18px;color:#3c434c;left:868px;transform-origin:0 50%;transform:scaleX(0.9684);">Allergies (0)</span>
<span class="t" style="top:862.0px;font-size:12px;line-height:18px;color:#c4c4c4;left:868px;transform-origin:0 50%;">Dr. Notes</span>
<span class="t" style="top:892.0px;font-size:12px;line-height:18px;color:#3c434c;left:868px;transform-origin:0 50%;transform:scaleX(0.9816);">Orders</span>
<span class="t" style="top:922.0px;font-size:12px;line-height:18px;color:#3c434c;left:868px;transform-origin:0 50%;transform:scaleX(0.9680);">Vaccinations</span>
<span class="t" style="top:952.0px;font-size:12px;line-height:18px;color:#3c434c;left:868px;transform-origin:0 50%;transform:scaleX(0.9593);">Portal Messages (0)</span>
<svg class="b" style="left:1355px;top:140px" width="6" height="3" viewBox="0 0 6 3"><path d="M0 3 L3 0 L6 3 Z" fill="#606060"/></svg>
<svg class="b" style="left:1355px;top:977px" width="6" height="4" viewBox="0 0 6 4"><path d="M0 0 L3 3.5 L6 0 Z" fill="#606060"/></svg>
<div class="b" style="left:1356px;top:148px;width:4px;height:807px;background:#cdccce;"></div>
<svg class="b" style="left:829px;top:991px" width="4" height="7" viewBox="0 0 4 7"><path d="M4 0 L0 3.5 L4 7 Z" fill="#606060"/></svg>
<svg class="b" style="left:1341px;top:991px" width="4" height="7" viewBox="0 0 4 7"><path d="M0 0 L4 3.5 L0 7 Z" fill="#606060"/></svg>
<div class="b" style="left:836px;top:993px;width:381px;height:4px;background:#cdccce;"></div>
<span class="t" style="top:148.0px;font-size:12px;line-height:18px;color:#3a4856;font-weight:bold;left:1734.3px;transform-origin:100% 50%;transform:scaleX(1.0160);">9 November 2018</span>
<svg class="b" style="left:1849px;top:154px" width="4" height="7" viewBox="0 0 4 7"><path d="M4 0 L0 3.5 L4 7 Z" fill="#444"/></svg>
<svg class="b" style="left:1901px;top:154px" width="4" height="7" viewBox="0 0 4 7"><path d="M0 0 L4 3.5 L0 7 Z" fill="#444"/></svg>
<svg class="b" style="left:1873px;top:153px" width="7" height="7" viewBox="0 0 7 7"><rect width="7" height="7" fill="#111"/><path d="M2.5 0 V7 M4.5 0 V7 M0 2.5 H7 M0 4.5 H7" stroke="#fff" stroke-width="0.45"/></svg>
<div class="b" style="left:1440px;top:177px;width:459px;height:22px;border:1px solid #8c8c8c;border-top-color:#aaaaaa;border-right-color:#555555;border-bottom:none;background:#fff;overflow:hidden;"></div>
<div class="b" style="left:1441px;top:179px;width:200px;height:19px;overflow:hidden;"><span class="t" style="left:2px;top:0.5px;font-size:14px;line-height:20px;color:#858585;transform-origin:0 50%;transform:scaleX(0.93);">09 Friday</span></div>
<div class="b" style="left:1374px;top:198px;width:66px;height:1px;background:#6e6e6e;"></div>
<div class="b" style="left:1440px;top:198px;width:458px;height:1px;background:#c4c4c4;"></div>
<div class="b" style="left:1420px;top:234px;width:478px;height:1px;background:#d0d0d0;"></div>
<div class="b" style="left:1374px;top:271px;width:524px;height:1px;background:#d0d0d0;"></div>
<div class="b" style="left:1420px;top:308px;width:478px;height:1px;background:#d0d0d0;"></div>
<div class="b" style="left:1374px;top:345px;width:524px;height:1px;background:#d0d0d0;"></div>
<div class="b" style="left:1420px;top:382px;width:478px;height:1px;background:#d0d0d0;"></div>
<div class="b" style="left:1374px;top:419px;width:524px;height:1px;background:#d0d0d0;"></div>
<div class="b" style="left:1420px;top:455px;width:478px;height:1px;background:#d0d0d0;"></div>
<div class="b" style="left:1374px;top:492px;width:524px;height:1px;background:#d0d0d0;"></div>
<div class="b" style="left:1420px;top:529px;width:478px;height:1px;background:#d0d0d0;"></div>
<div class="b" style="left:1374px;top:566px;width:524px;height:1px;background:#d0d0d0;"></div>
<div class="b" style="left:1420px;top:603px;width:478px;height:1px;background:#d0d0d0;"></div>
<div class="b" style="left:1374px;top:640px;width:524px;height:1px;background:#d0d0d0;"></div>
<div class="b" style="left:1420px;top:677px;width:478px;height:1px;background:#d0d0d0;"></div>
<div class="b" style="left:1374px;top:713px;width:524px;height:1px;background:#d0d0d0;"></div>
<div class="b" style="left:1420px;top:750px;width:478px;height:1px;background:#d0d0d0;"></div>
<div class="b" style="left:1374px;top:787px;width:524px;height:1px;background:#d0d0d0;"></div>
<div class="b" style="left:1420px;top:824px;width:478px;height:1px;background:#d0d0d0;"></div>
<div class="b" style="left:1374px;top:861px;width:524px;height:1px;background:#d0d0d0;"></div>
<div class="b" style="left:1420px;top:898px;width:478px;height:1px;background:#d0d0d0;"></div>
<div class="b" style="left:1374px;top:934px;width:524px;height:1px;background:#d0d0d0;"></div>
<div class="b" style="left:1420px;top:971px;width:478px;height:1px;background:#d0d0d0;"></div>
<div class="b" style="left:1440px;top:198px;width:1px;height:805px;background:#c9c9c9;"></div>
<div class="b" style="left:1374px;top:1001px;width:66px;height:1px;background:#8a8a8a;"></div>
<div class="b" style="left:1441px;top:1001px;width:457px;height:1px;background:#d0d0d0;"></div>
<span class="t" style="top:200.0px;font-size:15px;line-height:21px;color:#959595;left:1371.6px;transform-origin:100% 50%;transform:scaleX(0.8521);">10:30 AM</span>
<span class="t" style="top:273.0px;font-size:15px;line-height:21px;color:#959595;left:1372.7px;transform-origin:100% 50%;transform:scaleX(0.8191);">11:00 AM</span>
<span class="t" style="top:347.0px;font-size:15px;line-height:21px;color:#959595;left:1372.7px;transform-origin:100% 50%;transform:scaleX(0.8191);">11:30 AM</span>
<span class="t" style="top:421.0px;font-size:15px;line-height:21px;color:#959595;left:1370.8px;transform-origin:100% 50%;transform:scaleX(0.8099);">12:00 PM</span>
<span class="t" style="top:494.0px;font-size:15px;line-height:21px;color:#959595;left:1370.8px;transform-origin:100% 50%;transform:scaleX(0.8099);">12:30 PM</span>
<span class="t" style="top:568.0px;font-size:15px;line-height:21px;color:#959595;left:1379.1px;transform-origin:100% 50%;transform:scaleX(0.8056);">1:00 PM</span>
<span class="t" style="top:642.0px;font-size:15px;line-height:21px;color:#959595;left:1379.1px;transform-origin:100% 50%;transform:scaleX(0.8056);">1:30 PM</span>
<span class="t" style="top:715.0px;font-size:15px;line-height:21px;color:#959595;left:1379.1px;transform-origin:100% 50%;transform:scaleX(0.8414);">2:00 PM</span>
<span class="t" style="top:789.0px;font-size:15px;line-height:21px;color:#959595;left:1379.1px;transform-origin:100% 50%;transform:scaleX(0.8414);">2:30 PM</span>
<span class="t" style="top:863.0px;font-size:15px;line-height:21px;color:#959595;left:1379.1px;transform-origin:100% 50%;transform:scaleX(0.8414);">3:00 PM</span>
<span class="t" style="top:936.0px;font-size:15px;line-height:21px;color:#959595;left:1379.1px;transform-origin:100% 50%;transform:scaleX(0.8414);">3:30 PM</span>
<div class="b" style="left:1443px;top:383px;width:451px;height:145px;background:#021f5f;"></div>
<div class="b" style="left:1443px;top:383px;width:3px;height:145px;background:#6b6f73;"></div>
<div class="b" style="left:1446px;top:383px;width:2px;height:145px;background:#5aa2da;"></div>
<div class="b" style="left:1893px;top:383px;width:1px;height:145px;background:#3f7fc8;"></div>
<span class="t" style="top:447.0px;font-size:12px;line-height:18px;color:#ffffff;left:1639.0px;transform-origin:0 50%;transform:scaleX(0.9443);">Bee, Brenda</span>
<div class="b" style="left:1443px;top:641px;width:451px;height:145px;background:#021f5f;"></div>
<div class="b" style="left:1443px;top:641px;width:3px;height:145px;background:#6b6f73;"></div>
<div class="b" style="left:1446px;top:641px;width:2px;height:145px;background:#5aa2da;"></div>
<div class="b" style="left:1893px;top:641px;width:1px;height:145px;background:#3f7fc8;"></div>
<span class="t" style="top:705.0px;font-size:12px;line-height:18px;color:#ffffff;left:1637.5px;transform-origin:0 50%;transform:scaleX(0.9335);">Jones, Jaime</span>
<div class="b" style="left:1898px;top:198px;width:18px;height:805px;background:#f0f0f0;"></div>
<div class="b" style="left:1898px;top:215px;width:18px;height:446px;background:#c9c9c9;"></div>
<svg class="b" style="left:1903px;top:204px" width="8" height="5" viewBox="0 0 8 5"><path d="M0.5 4.5 L4 1 L7.5 4.5" fill="none" stroke="#8a8a8a" stroke-width="1"/></svg>
<svg class="b" style="left:1903px;top:991px" width="8" height="5" viewBox="0 0 8 5"><path d="M0.5 0.5 L4 4 L7.5 0.5" fill="none" stroke="#8a8a8a" stroke-width="1"/></svg>
<div class="b" style="left:2px;top:1004px;width:1916px;height:36px;background:#f0eeee;"></div>
<span class="t" style="top:1013.0px;font-size:12px;line-height:18px;color:#474f5b;font-weight:bold;left:21px;transform-origin:0 50%;transform:scaleX(0.9453);">User:</span>
<span class="t" style="top:1013.0px;font-size:12px;line-height:18px;color:#4f5661;left:53px;transform-origin:0 50%;transform:scaleX(1.0119);">Allan</span>
<span class="t" style="top:1013.0px;font-size:12px;line-height:18px;color:#474f5b;font-weight:bold;left:95px;transform-origin:0 50%;transform:scaleX(0.9711);">Workstation:</span>
<span class="t" style="top:1013.0px;font-size:12px;line-height:18px;color:#4f5661;left:169px;transform-origin:0 50%;transform:scaleX(0.9000);">CFREW-HP</span>
<span class="t" style="top:1013.0px;font-size:12px;line-height:18px;color:#474f5b;font-weight:bold;left:242px;transform-origin:0 50%;transform:scaleX(0.9429);">Server:</span>
<span class="t" style="top:1013.0px;font-size:12px;line-height:18px;color:#4f5661;left:284px;transform-origin:0 50%;transform:scaleX(0.9296);">E1-IIS</span>
<span class="t" style="top:1013.0px;font-size:12px;line-height:18px;color:#474f5b;font-weight:bold;left:330px;transform-origin:0 50%;transform:scaleX(0.9271);">Practice:</span>
<span class="t" style="top:1013.0px;font-size:12px;line-height:18px;color:#4f5661;left:381px;transform-origin:0 50%;transform:scaleX(0.9818);">111-Sales Demo</span>
<span class="t" style="top:1013.0px;font-size:12px;line-height:18px;color:#474f5b;font-weight:bold;left:482px;transform-origin:0 50%;transform:scaleX(0.9446);">Location:</span>
<span class="t" style="top:1013.0px;font-size:12px;line-height:18px;color:#4f5661;left:536px;transform-origin:0 50%;transform:scaleX(0.9813);">ChartLogic Clinic</span>
<div class="b" style="left:629px;top:1007px;width:32px;height:30px;background:#eef4fb;border:1px solid #3c4650;"></div>
<svg class="b" style="left:639px;top:1019px" width="11" height="6" viewBox="0 0 11 6"><path d="M0 6 L5.5 0 L11 6 Z" fill="#222"/></svg>
<span class="t" style="top:1013.0px;font-size:12px;line-height:18px;color:#474f5b;font-weight:bold;left:676px;transform-origin:0 50%;transform:scaleX(0.9643);">Client:</span>
<span class="t" style="top:1013.0px;font-size:12px;line-height:18px;color:#4f5661;left:715px;transform-origin:0 50%;transform:scaleX(0.9453);">9.1.5.74</span>
<span class="t" style="top:1013.0px;font-size:12px;line-height:18px;color:#474f5b;font-weight:bold;left:771px;transform-origin:0 50%;transform:scaleX(0.9112);">Active Case(s):</span>
<span class="t" style="top:1013.0px;font-size:12px;line-height:18px;color:#4f5661;left:853px;transform-origin:0 50%;transform:scaleX(1.0109);">None</span>
<div class="b" style="left:886px;top:1007px;width:32px;height:30px;background:#eef4fb;border:1px solid #3c4650;"></div>
<svg class="b" style="left:896px;top:1019px" width="11" height="6" viewBox="0 0 11 6"><path d="M0 6 L5.5 0 L11 6 Z" fill="#222"/></svg>
<span class="t" style="top:1013.0px;font-size:12px;line-height:18px;color:#474f5b;font-weight:bold;left:934px;transform-origin:0 50%;transform:scaleX(0.9253);">System Time:</span>
<span class="t" style="top:1013.0px;font-size:12px;line-height:18px;color:#4f5661;left:1010px;transform-origin:0 50%;transform:scaleX(1.0159);">11/12/2018 10:03 AM</span>
<svg class="b" style="left:1858px;top:1015px" width="14" height="16" viewBox="0 0 14 16"><path d="M1.2 4.6 Q7 1.2 12.8 4.6" fill="none" stroke="#79ab57" stroke-width="2"/><path d="M3.6 8.4 Q7 6.2 10.4 8.4" fill="none" stroke="#6a9f48" stroke-width="2"/><circle cx="7" cy="11.8" r="1.7" fill="#4b9029"/></svg>
<div class="b" style="left:1879px;top:1007px;width:32px;height:30px;background:#eef4fb;border:1px solid #3c4650;"></div>
<svg class="b" style="left:1885px;top:1012px" width="20" height="20" viewBox="0 0 20 20"><ellipse cx="10.2" cy="9.6" rx="9" ry="7.2" fill="#19232d"/><path d="M3.2 13 L1 18 L8 15.8 Z" fill="#19232d"/><circle cx="5.6" cy="9.8" r="1.15" fill="#fff"/><circle cx="10.2" cy="9.8" r="1.15" fill="#fff"/><circle cx="14.8" cy="9.8" r="1.15" fill="#fff"/></svg>
</body></html>
